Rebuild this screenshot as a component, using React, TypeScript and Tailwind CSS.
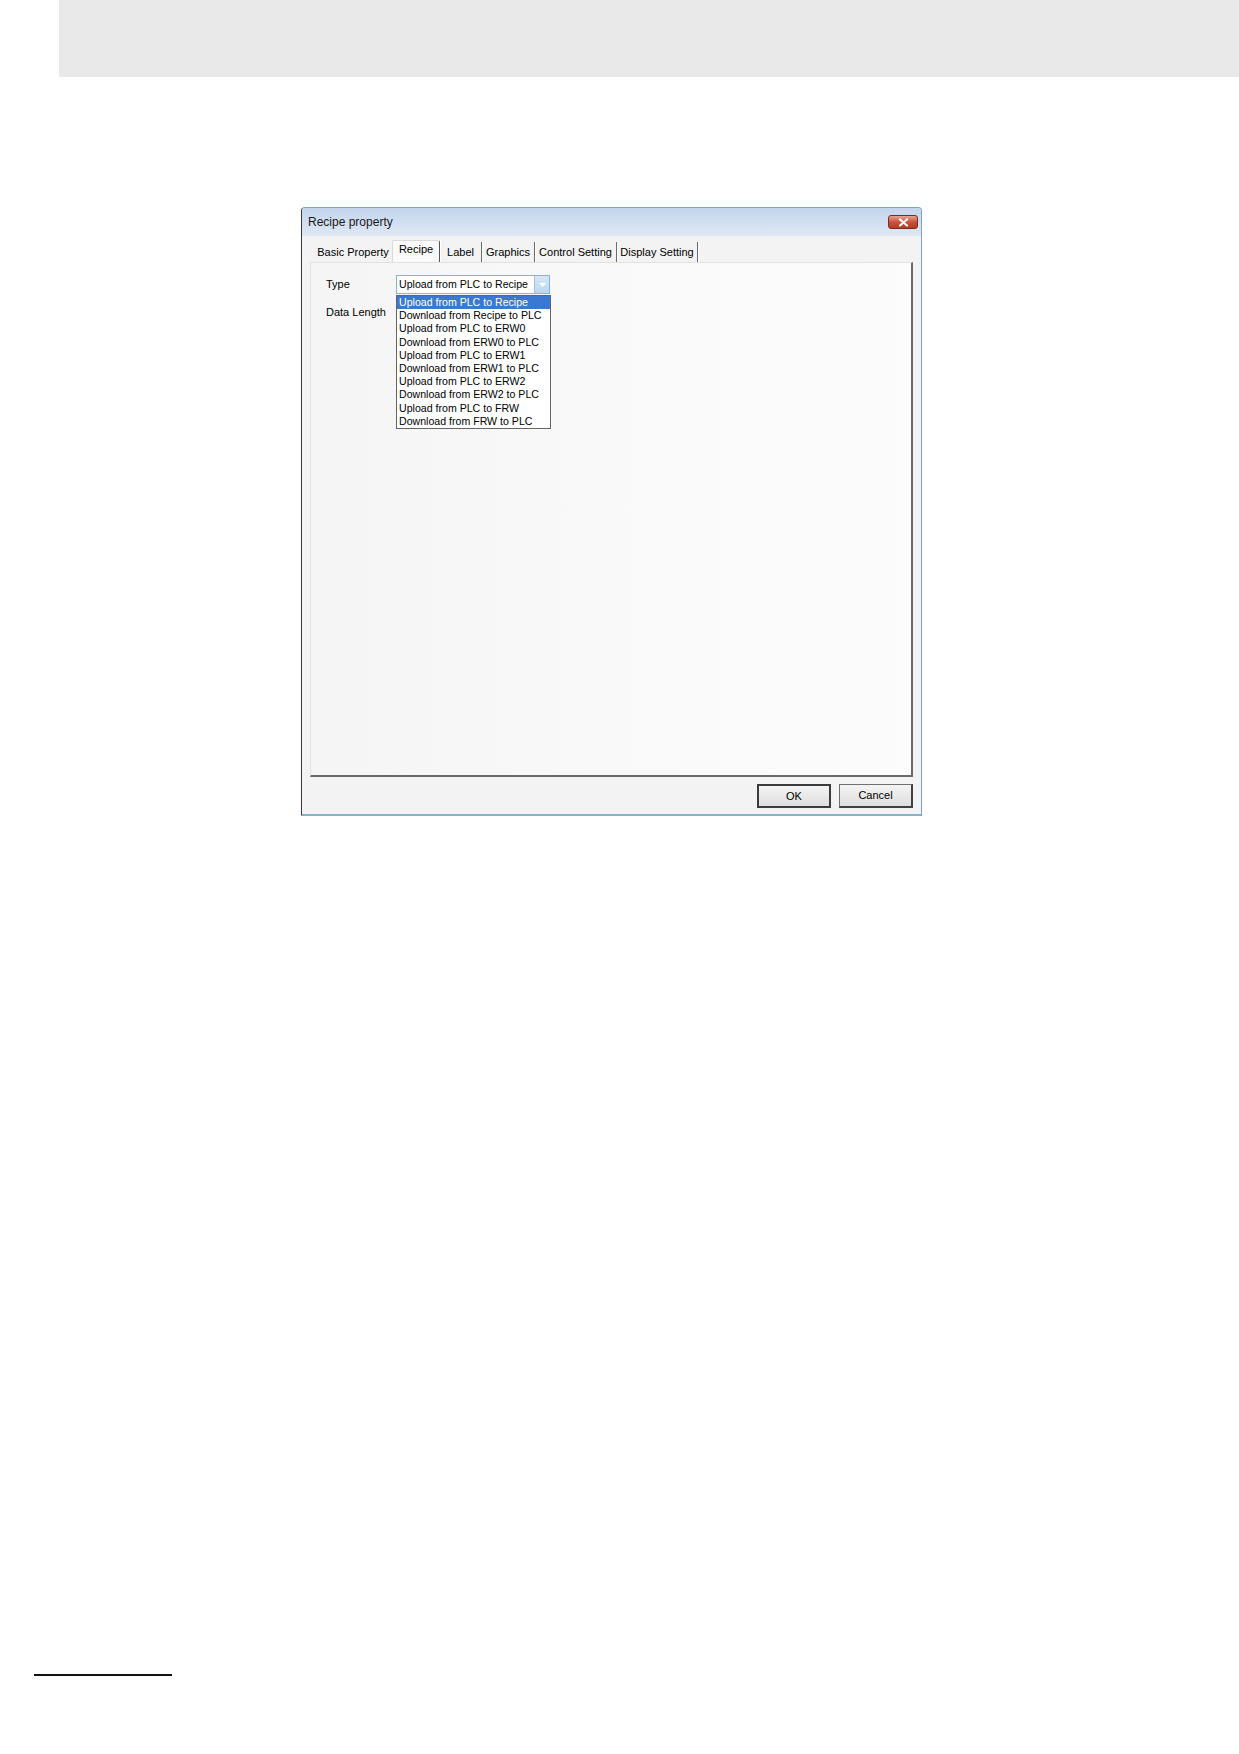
const tabs = [
  { label: "Basic Property", w: "w-[82px]" },
  { label: "Recipe", w: "w-[48px]", active: true },
  { label: "Label", w: "w-[42px]" },
  { label: "Graphics", w: "w-[53px]" },
  { label: "Control Setting", w: "w-[82px]" },
  { label: "Display Setting", w: "w-[81px]" },
];

const options = [
  "Upload from PLC to Recipe",
  "Download from Recipe to PLC",
  "Upload from PLC to ERW0",
  "Download from ERW0 to PLC",
  "Upload from PLC to ERW1",
  "Download from ERW1 to PLC",
  "Upload from PLC to ERW2",
  "Download from ERW2 to PLC",
  "Upload from PLC to FRW",
  "Download from FRW to PLC",
];

function CloseButton() {
  return (
    <div className="w-[30px] h-[14px] rounded-[3px] border border-[#7a2a1e] bg-gradient-to-b from-[#e6a393] via-[#c8533c] to-[#b83a22] flex items-center justify-center">
      <svg width="11" height="9" viewBox="0 0 11 9">
        <path d="M2 1.5 L9 7.5 M9 1.5 L2 7.5" stroke="#ffffff" strokeWidth="2.2" strokeLinecap="round" />
      </svg>
    </div>
  );
}

function TabStrip() {
  return (
    <div className="flex h-[22px] mt-[4px] items-end">
      {tabs.map((t) =>
        t.active ? (
          <div
            key={t.label}
            className={`${t.w} h-[22px] flex items-center justify-center bg-[#fafafa] border-l border-t border-[#dadada] border-r border-r-[#555] shadow-[1px_0_0_#ffffff] rounded-t-[2px] pb-[4px]`}
          >
            {t.label}
          </div>
        ) : (
          <div
            key={t.label}
            className={`${t.w} h-[20px] flex items-center justify-center ${
              t.label === "Basic Property" ? "pl-[4px]" : "border-r border-r-[#6a6a6a] shadow-[1px_0_0_#ffffff]"
            } pt-[1px]`}
          >
            {t.label}
          </div>
        )
      )}
    </div>
  );
}

function TypeCombo() {
  return (
    <div className="relative">
      <div className="w-[154px] h-[19px] border border-[#7eb4ea] bg-white flex">
        <div className="flex-1 pl-[2px] leading-[17px] text-[10.6px]">Upload from PLC to Recipe</div>
        <div className="w-[15px] h-full bg-gradient-to-b from-[#d6e7f8] to-[#bcd6f2] border-l border-[#9cc3ec] flex items-center justify-center">
          <svg width="7" height="4" viewBox="0 0 7 4">
            <path d="M0 0 L7 0 L3.5 4 Z" fill="#ffffff" />
          </svg>
        </div>
      </div>
      {/* open list of the combo */}
      <div className="absolute left-0 top-[20px] w-[155px] border border-[#646464] bg-white text-[10.6px] z-10">
        {options.map((o, i) => (
          <div
            key={o}
            className={`h-[13.2px] leading-[13px] pl-[2px] whitespace-nowrap ${
              i === 0 ? "bg-[#3a78d4] text-white" : "text-black"
            }`}
          >
            {o}
          </div>
        ))}
      </div>
    </div>
  );
}

function Button({ children, primary }: { children: string; primary?: boolean }) {
  return (
    <div
      className={`w-[74px] h-[24px] flex items-center justify-center bg-gradient-to-b from-[#f4f4f4] to-[#dedede] ${
        primary ? "border-2 border-[#3c3c3c]" : "border border-[#707070] border-b-2 border-r-2 border-b-[#404040] border-r-[#404040]"
      }`}
    >
      {children}
    </div>
  );
}

export default function App() {
  return (
    <div
      className="relative w-[1239px] h-[1754px] bg-white overflow-hidden text-[11px] text-black"
      style={{ fontFamily: '"Liberation Sans", Arial, sans-serif' }}
    >
      <div className="ml-[59px] h-[77px] bg-[#e9e9e9]" />

      <div className="ml-[301px] mt-[130px] w-[621px] h-[609px] flex flex-col border border-[#7aa8bb] border-l-[#3a3a3a] border-b-2 border-b-[#80b6c6] rounded-t-[4px] bg-[#f3f3f3]">
        {/* title bar */}
        <div className="h-[28px] flex items-center justify-between pl-[6px] pr-[3px] bg-gradient-to-b from-[#c3d5ec] to-[#dfe8f4] rounded-t-[3px]">
          <span className="text-[12px] text-[#1a1a1a]">Recipe property</span>
          <CloseButton />
        </div>

        <div className="flex-1 flex flex-col pl-[8px] pr-[8px]">
          <TabStrip />

          {/* Recipe page */}
          <div className="h-[515px] bg-gradient-to-r from-[#f5f5f5] via-[#f9f9f9] to-[#fcfcfc] border-t border-l border-[#e2e2e2] border-r-2 border-r-[#6a6a6a] border-b-2 border-b-[#6a6a6a] pt-[12px] pl-[15px]">
            <div className="flex items-center">
              <div className="w-[70px]">Type</div>
              <TypeCombo />
            </div>
            <div className="mt-[10px] w-[70px]">Data Length</div>
          </div>

          <div className="flex justify-end gap-[8px] mt-[7px]">
            <Button primary>OK</Button>
            <Button>Cancel</Button>
          </div>
        </div>
      </div>

      <div className="ml-[34px] mt-[858px] w-[138px] h-[2px] bg-[#111]" />
    </div>
  );
}
